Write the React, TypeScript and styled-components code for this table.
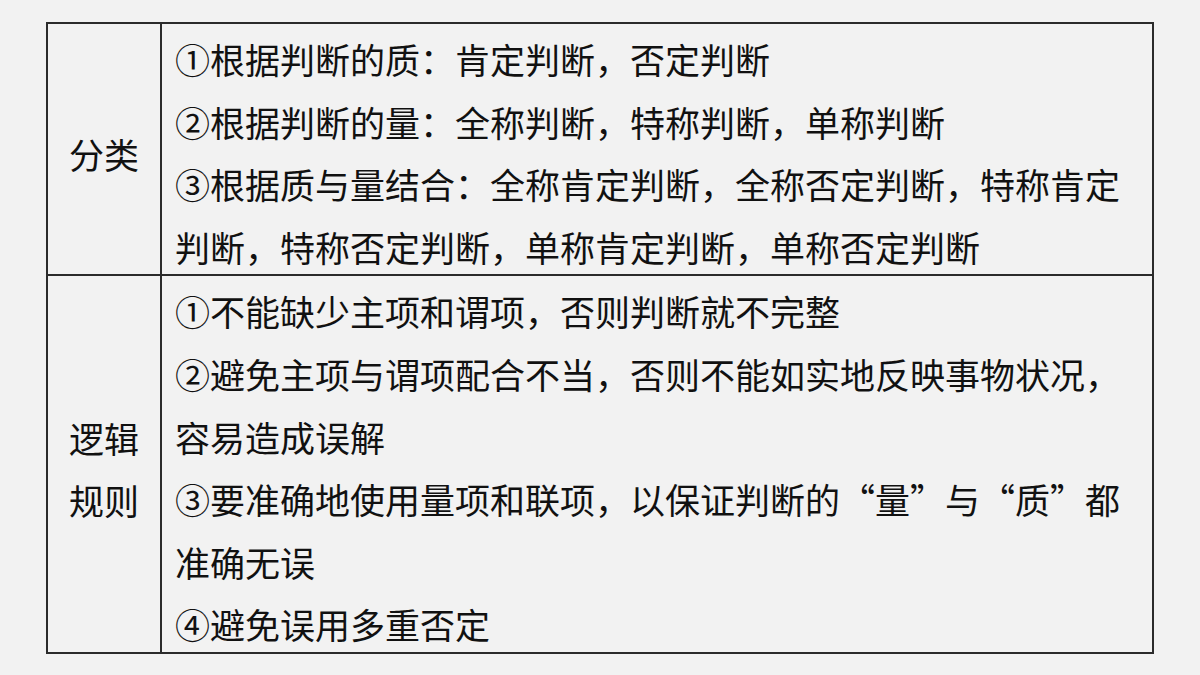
import React from 'react'
import styled, {createGlobalStyle} from 'styled-components'

const GlobalStyle = createGlobalStyle`
  html, body {
    margin: 0;
    padding: 0;
    background: #f2f2f2;
  }
  body {
    font-family: "Noto Sans CJK SC", "Noto Sans", sans-serif;
    color: #111;
  }
`

type Row = {
  head: string[]
  lines: string[]
}

const rows: Row[] = [
  {
    head: ['分类'],
    lines: [
      '①根据判断的质：肯定判断，否定判断',
      '②根据判断的量：全称判断，特称判断，单称判断',
      '③根据质与量结合：全称肯定判断，全称否定判断，特称肯定判断，特称否定判断，单称肯定判断，单称否定判断',
    ],
  },
  {
    head: ['逻辑', '规则'],
    lines: [
      '①不能缺少主项和谓项，否则判断就不完整',
      '②避免主项与谓项配合不当，否则不能如实地反映事物状况，容易造成误解',
      '③要准确地使用量项和联项，以保证判断的“量”与“质”都准确无误',
      '④避免误用多重否定',
    ],
  },
]

export default function App() {
  return (
    <Page>
      <GlobalStyle />
      <Table>
        <tbody>
          {rows.map((row, i) => (
            <tr key={i}>
              <HeadCell>
                {row.head.map((h) => (
                  <div key={h}>{h}</div>
                ))}
              </HeadCell>
              <BodyCell>
                <Lines>
                  {row.lines.map((l) => (
                    <div key={l}>{l}</div>
                  ))}
                </Lines>
              </BodyCell>
            </tr>
          ))}
        </tbody>
      </Table>
    </Page>
  )
}

const Page = styled.div`
  width: 1200px;
  height: 675px;
  box-sizing: border-box;
  padding: 22px 46px 0 46px;
  background: #f2f2f2;
`

const Table = styled.table`
  width: 1108px;
  border-collapse: collapse;
  font-size: 35px;
  line-height: 62.6px;
`

const HeadCell = styled.td`
  width: 112px;
  border: 2px solid #2b2b2b;
  padding: 0;
  text-align: center;
  vertical-align: middle;

  & > div:first-child {
    padding-top: 10px;
  }
`

const BodyCell = styled.td`
  border: 2px solid #2b2b2b;
  padding: 0 13px;
  vertical-align: top;
`

const Lines = styled.div`
  padding-top: 4px;
  margin-bottom: -4px;
`
